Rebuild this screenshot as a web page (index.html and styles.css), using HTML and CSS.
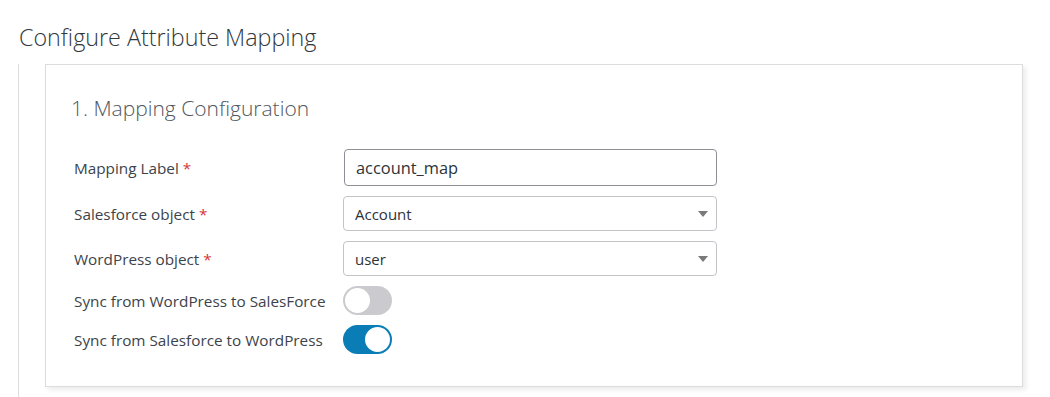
FILE: index.html
```html
<!DOCTYPE html>
<html lang="en">
<head>
    <meta charset="UTF-8">
    <meta name="viewport" content="width=device-width, initial-scale=1.0">
    <title>Configure Attribute Mapping</title>
    <link rel="stylesheet" href="styles.css">
</head>
<body>
    <h2 class="page-title">Configure Attribute Mapping</h2>

    <div class="page-body">
        <div class="card">
            <h3 class="card-title">1. Mapping Configuration</h3>

            <form class="mapping-form" onsubmit="return false;">
                <label for="map-label" class="field-label">Mapping Label <span class="req">*</span></label>
                <input type="text" id="map-label" class="text-input" value="account_map">

                <label for="sf-object" class="field-label">Salesforce object <span class="req">*</span></label>
                <div class="select-wrap">
                    <select id="sf-object" class="select-input">
                        <option>Account</option>
                        <option>Contact</option>
                        <option>Lead</option>
                    </select>
                </div>

                <label for="wp-object" class="field-label">WordPress object <span class="req">*</span></label>
                <div class="select-wrap">
                    <select id="wp-object" class="select-input">
                        <option>user</option>
                        <option>post</option>
                    </select>
                </div>

                <span class="field-label">Sync from WordPress to SalesForce</span>
                <label class="switch">
                    <input type="checkbox">
                    <span class="slider"></span>
                </label>

                <span class="field-label">Sync from Salesforce to WordPress</span>
                <label class="switch">
                    <input type="checkbox" checked>
                    <span class="slider"></span>
                </label>
            </form>
        </div>
    </div>
</body>
</html>
```

FILE: styles.css
```css
body {
    margin: 0;
    padding: 0;
    background-color: #fff;
    color: #3c434a;
    font-family: "Open Sans", "Noto Sans", sans-serif;
    height: 397px;
    overflow: hidden;
}

.page-title {
    margin: 0;
    padding: 20px 0 0 19px;
    height: 64px;
    box-sizing: border-box;
    font-size: 23.3px;
    font-weight: 300;
    line-height: 34px;
    color: #32373c;
}

.page-body {
    margin-left: 18px;
    border-left: 1px solid #dcdcde;
    padding-left: 26px;
    height: 340px;
}

.card {
    width: 978px;
    box-sizing: border-box;
    background: #fff;
    border: 1px solid #dcdcde;
    box-shadow: 3px 3px 5px rgba(0, 0, 0, 0.08);
    padding: 25px 25px 32px 25px;
}

.card-title {
    margin: 0 0 23px 0;
    font-size: 21px;
    font-weight: 300;
    line-height: 36px;
    color: #50575e;
}

.mapping-form {
    display: grid;
    grid-template-columns: 269px 374px;
    row-gap: 10px;
    align-items: center;
    padding-left: 3px;
}

.field-label {
    font-size: 15.3px;
    color: #3c434a;
}

.req {
    color: #d63638;
}

.text-input {
    height: 37px;
    width: 373px;
    box-sizing: border-box;
    border: 1px solid #8c8f94;
    border-radius: 4px;
    padding: 0 11px;
    font-family: inherit;
    font-size: 16.4px;
    color: #2c3338;
    margin-left: 1px;
}

.select-wrap {
    position: relative;
    width: 374px;
}

.select-wrap::after {
    content: "";
    position: absolute;
    right: 9px;
    top: 15px;
    border-left: 5px solid transparent;
    border-right: 5px solid transparent;
    border-top: 6px solid #7a7a7a;
    pointer-events: none;
}

.select-input {
    appearance: none;
    -webkit-appearance: none;
    width: 100%;
    height: 35px;
    box-sizing: border-box;
    border: 1px solid #c3c4c7;
    border-radius: 4px;
    background: #fff;
    padding: 0 11px;
    font-family: inherit;
    font-size: 15px;
    color: #2c3338;
}

.switch {
    position: relative;
    display: inline-block;
    width: 49px;
    height: 29px;
}

.switch input {
    opacity: 0;
    width: 0;
    height: 0;
}

.slider {
    position: absolute;
    inset: 0;
    background-color: #cbcbcf;
    border-radius: 15px;
    cursor: pointer;
}

.slider::before {
    content: "";
    position: absolute;
    width: 25px;
    height: 25px;
    left: 2px;
    top: 2px;
    background-color: #fff;
    border-radius: 50%;
    transition: transform 0.2s;
}

.switch input:checked + .slider {
    background-color: #0a7db7;
}

.switch input:checked + .slider::before {
    transform: translateX(20px);
}
```
